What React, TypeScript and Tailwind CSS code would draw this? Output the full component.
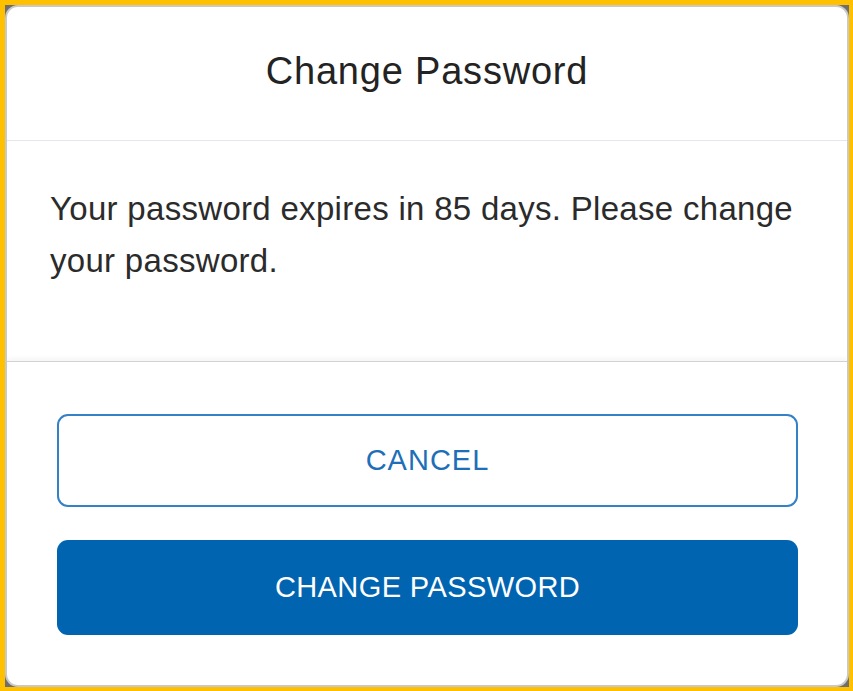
export default function App() {
  return (
    <div className="w-[853px] h-[691px] bg-[#ffc000] pt-[5px] pl-[5px] pr-[4px] pb-[4px] flex font-['Liberation_Sans',Arial,sans-serif]">
      <div className="flex-1 flex bg-[#6e6e6e]">
        {/* Modal */}
        <div className="flex-1 flex flex-col bg-white rounded-[13px] border-2 border-[#c9c9c9] overflow-hidden">
          <div className="h-[134px] shrink-0 flex items-center justify-center pb-[6px] border-b border-[#e3e6ea]">
            <h1 className="text-[38px] leading-none tracking-[0.8px] text-[#232323]">Change Password</h1>
          </div>

          <div className="h-[220px] shrink-0 pt-[42px] pl-[43px] pr-[40px]">
            <p className="text-[33px] leading-[52px] tracking-[0.3px] text-[#2b2b2b]">
              Your password expires in 85 days. Please change your password.
            </p>
          </div>

          <div className="flex-1 flex flex-col gap-[33px] border-t border-[#d2d2d2] shadow-[0_-3px_4px_rgba(0,0,0,0.04)] pt-[52px] pl-[50px] pr-[49px]">
            <button className="h-[93px] rounded-[11px] border-2 border-[#3381c7] bg-white text-[#1e6fb7] text-[29px] tracking-[1px]">
              CANCEL
            </button>
            <button className="h-[95px] rounded-[11px] bg-[#0064b0] text-white text-[29px] tracking-[0.4px]">
              CHANGE PASSWORD
            </button>
          </div>
        </div>
      </div>
    </div>
  )
}
